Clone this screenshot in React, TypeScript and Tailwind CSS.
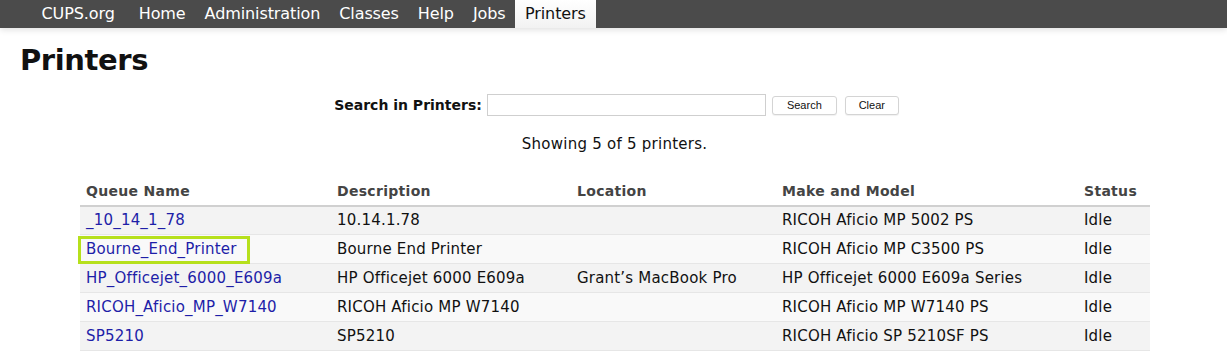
const navItems = ["CUPS.org", "Home", "Administration", "Classes", "Help", "Jobs"];

const printers = [
  { queue: "_10_14_1_78", desc: "10.14.1.78", loc: "", model: "RICOH Aficio MP 5002 PS", status: "Idle" },
  { queue: "Bourne_End_Printer", desc: "Bourne End Printer", loc: "", model: "RICOH Aficio MP C3500 PS", status: "Idle", marked: true },
  { queue: "HP_Officejet_6000_E609a", desc: "HP Officejet 6000 E609a", loc: "Grant\u2019s MacBook Pro", model: "HP Officejet 6000 E609a Series", status: "Idle" },
  { queue: "RICOH_Aficio_MP_W7140", desc: "RICOH Aficio MP W7140", loc: "", model: "RICOH Aficio MP W7140 PS", status: "Idle" },
  { queue: "SP5210", desc: "SP5210", loc: "", model: "RICOH Aficio SP 5210SF PS", status: "Idle" },
];

export default function App() {
  return (
    <div className="w-[1227px] h-[358px] overflow-hidden bg-white text-[#111] font-['DejaVu_Sans',sans-serif]">
      {/* top nav */}
      <div className="h-[28px] bg-[#4b4b4b] flex items-stretch pl-[32px] shadow-[0_2px_6px_rgba(0,0,0,0.12)]">
        {navItems.map((n, i) => (
          <a key={n} className={`px-[9.5px] flex items-center text-white text-[16px] tracking-[-0.1px] ${i === 0 ? "mr-[5px]" : ""}`}>
            {n}
          </a>
        ))}
        <a className="px-[10px] flex items-center text-[#111] text-[16px] tracking-[-0.1px] bg-gradient-to-b from-white to-[#f2f2f2]">
          Printers
        </a>
      </div>

      <h1 className="mt-[14px] ml-[20px] text-[29px] leading-[36px] font-bold tracking-[-0.4px]">Printers</h1>

      <div className="mt-[16px] flex items-center justify-center pl-[6px]">
        <span className="text-[14px] font-bold mr-[5px]">Search in Printers:</span>
        <input className="w-[279px] h-[22px] border border-[#cfcfcf] outline-none" />
        <button className="ml-[6px] w-[65px] h-[19px] border border-[#d4d4d4] rounded-[3px] bg-white text-[11px] font-['Liberation_Sans',sans-serif] shadow-[0_1px_1px_rgba(0,0,0,0.06)]">
          Search
        </button>
        <button className="ml-[8px] w-[54px] h-[19px] border border-[#d4d4d4] rounded-[3px] bg-white text-[11px] font-['Liberation_Sans',sans-serif] shadow-[0_1px_1px_rgba(0,0,0,0.06)]">
          Clear
        </button>
      </div>

      <p className="mt-[17px] text-center text-[15px] tracking-[0.25px] pl-[2px]">Showing 5 of 5 printers.</p>

      <table className="mt-[25px] ml-[80px] w-[1070px] table-fixed border-collapse text-[15px] tracking-[0.2px]">
        <colgroup>
          <col className="w-[251px]" />
          <col className="w-[240px]" />
          <col className="w-[205px]" />
          <col className="w-[302px]" />
          <col className="w-[72px]" />
        </colgroup>
        <thead>
          <tr className="border-b-2 border-[#d0d0d0] text-left text-[#444] text-[14px] tracking-[0.3px]">
            <th className="px-[6px] pb-[3px] font-bold">Queue Name</th>
            <th className="px-[6px] pb-[3px] font-bold">Description</th>
            <th className="px-[6px] pb-[3px] font-bold">Location</th>
            <th className="px-[6px] pb-[3px] font-bold">Make and Model</th>
            <th className="px-[6px] pb-[3px] font-bold">Status</th>
          </tr>
        </thead>
        <tbody>
          {printers.map((p, i) => (
            <tr key={p.queue} className={`h-[29px] border-b border-[#e6e6e6] ${i % 2 === 0 ? "bg-[#f3f3f3]" : "bg-[#f9f9f9]"}`}>
              <td className="px-[6px] relative">
                <a className="text-[#1e1ea8]">{p.queue}</a>
                {p.marked && (
                  <span className="absolute left-[-2px] top-[1px] w-[172px] h-[28px] border-[3px] border-[#b6e01c]" />
                )}
              </td>
              <td className="px-[6px]">{p.desc}</td>
              <td className="px-[6px]">{p.loc}</td>
              <td className="px-[6px]">{p.model}</td>
              <td className="px-[6px]">{p.status}</td>
            </tr>
          ))}
        </tbody>
      </table>
    </div>
  );
}
